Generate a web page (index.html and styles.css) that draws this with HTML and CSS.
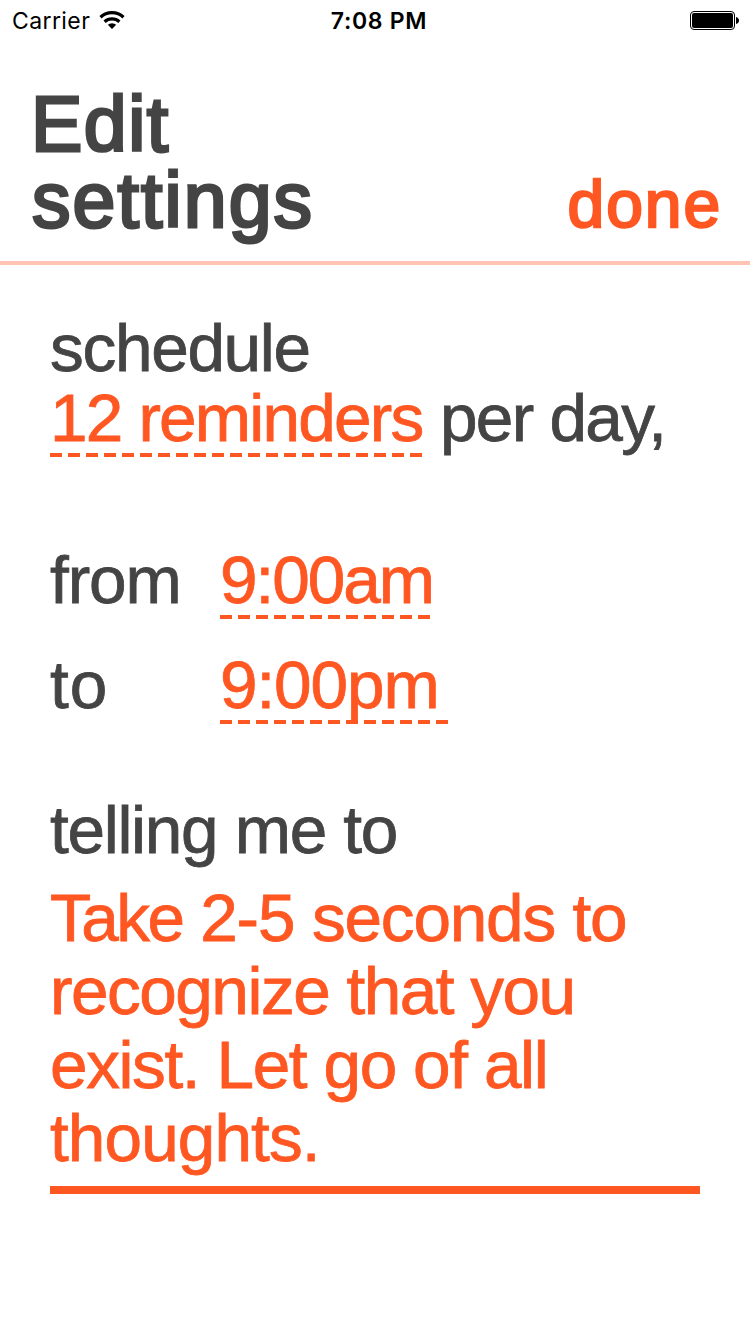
FILE: index.html
```html
<!DOCTYPE html>
<html lang="en">
<head>
<meta charset="utf-8">
<title>Edit settings</title>
<link rel="stylesheet" href="styles.css">
</head>
<body>
<div class="status">
  <div class="carrier"><span class="carrier-name">Carrier</span>
    <svg class="wifi" viewBox="0 0 26 18" width="26" height="18"><g fill="none" stroke="#000" stroke-width="3.200"><path d="M1.500 6.200a17 17 0 0 1 23 0"/><path d="M5.600 10.700a11 11 0 0 1 14.800 0"/></g><path d="M13 18l-4.200-4.200a6.200 6.200 0 0 1 8.400 0z"/></svg>
  </div>
  <div class="clock">7:08 PM</div>
  <svg class="battery" viewBox="0 0 49 19" width="49" height="19"><rect x=".5" y=".5" width="44" height="18" rx="3.5" fill="none" stroke="#000"/><rect x="2" y="2" width="41" height="15" rx="2"/><path d="M46 6q3 1 3 3.500t-3 3.500z"/></svg>
</div>
<header class="header">
  <h1 class="title"><span class="line title-edit">Edit</span><span class="line title-settings">settings</span></h1>
  <a class="done">done</a>
</header>
<main class="content">
  <p class="row"><span class="t-schedule">schedule</span></p>
  <p class="row count"><span class="value dash"><span class="t-count">12 reminders</span></span><span class="t-per">per day,</span></p>
  <p class="row from"><span class="label t-from">from</span><span class="value dash from-value"><span class="t-start">9:00am</span></span></p>
  <p class="row to"><span class="label t-to">to</span><span class="value dash to-value"><span class="t-end">9:00pm</span></span></p>
  <p class="row telling"><span class="t-telling">telling me to</span></p>
  <div class="message"><span class="line m1"><span class="take">Take</span> <span class="range">2-5</span> seconds to</span><span class="line m2">recognize that you</span><span class="line m3">exist. Let go of all</span><span class="line m4">thoughts.</span></div>
</main>
</body>
</html>
```
FILE: styles.css
```css
* { box-sizing: border-box; }
body { margin: 0; background: #fff; color: #444444; font-family: "Liberation Sans", Arial, sans-serif; }
p, h1 { margin: 0; }
.line { display: block; white-space: nowrap; }
.status { height: 41px; display: grid; grid-template-columns: 1fr auto 1fr; align-items: center; padding: 0 11px 0 12px; color: #000; font-family: Inter, sans-serif; font-size: 23px; }
.carrier { display: flex; align-items: center; gap: 9px; }
.carrier-name { letter-spacing: .4px; }
.wifi { margin-bottom: 2px; }
.clock { font-weight: 600; letter-spacing: .7px; padding-left: 7px; }
.battery { justify-self: end; }
.header { height: 224px; padding: 45px 30px 0 31px; display: flex; justify-content: space-between; border-bottom: 4px solid #ffc4b4; }
.title { font-size: 77px; line-height: 76px; font-weight: 400; -webkit-text-stroke: 3px #444444; }
.title-edit { letter-spacing: 1.5px; }
.title-settings { letter-spacing: 2.1px; padding-left: 1px; }
.done { margin: 80px -2px 0 0; color: #ff5722; font-size: 66px; line-height: 76px; letter-spacing: 1.9px; -webkit-text-stroke: 2.4px #ff5722; }
.content { padding: 48px 50px 0; font-size: 67.5px; -webkit-text-stroke: .8px; }
.row { display: flex; height: 70px; line-height: 70px; white-space: nowrap; }
.value { color: #ff5722; }
.dash { height: 75px; background: repeating-linear-gradient(90deg, #ff5722 0 12px, transparent 12px 18px) bottom 1px left 0 / 100% 4px no-repeat; }
.t-schedule { letter-spacing: -1.3px; }
.count .value { width: 372px; }
.t-count { letter-spacing: -1.8px; }
.t-per { margin-left: 18px; letter-spacing: -1.7px; }
.from { margin-top: 92px; }
.label { width: 170px; }
.t-from { letter-spacing: -1.1px; }
.from-value { width: 210px; }
.t-start { letter-spacing: -2.05px; }
.to { margin-top: 35px; }
.t-to { letter-spacing: 1px; }
.to-value { width: 228px; }
.t-end { letter-spacing: -1.1px; }
.telling { margin-top: 75px; letter-spacing: -1.3px; }
.message { margin-top: 15px; height: 314px; padding-top: 1px; color: #ff5722; line-height: 73.3px; border-bottom: 8px solid #ff5722; }
.m1 { letter-spacing: -1.2px; }
.take { letter-spacing: -2.5px; }
.range { letter-spacing: -1.1px; }
.m2 { letter-spacing: -1.5px; }
.m3 { letter-spacing: -1.4px; }
.m4 { letter-spacing: -.9px; }
```
